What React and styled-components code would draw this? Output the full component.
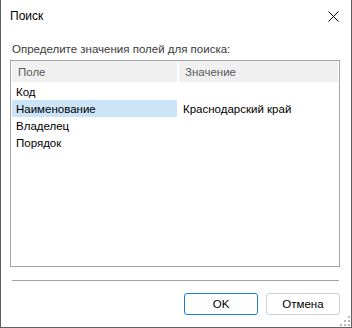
import React from 'react';
import styled, { createGlobalStyle } from 'styled-components';

const GlobalStyle = createGlobalStyle`
  html, body {
    margin: 0;
    padding: 0;
    background: #ffffff;
  }
  * {
    box-sizing: border-box;
  }
`;

const Window = styled.div`
  display: flex;
  flex-direction: column;
  width: 352px;
  height: 328px;
  background: #ffffff;
  border: 1px solid #5f5f5f;
  border-top: none;
  font-family: 'Liberation Sans', Arial, sans-serif;
  font-size: 11.5px;
  color: #000;
  position: relative;
`;

const TitleBar = styled.div`
  display: flex;
  align-items: center;
  justify-content: space-between;
  height: 31px;
  padding: 1px 10px 0 9px;
`;

const Title = styled.span`
  font-size: 12px;
  color: #000;
`;

const CloseButton = styled.button`
  display: flex;
  align-items: center;
  justify-content: center;
  width: 16px;
  height: 16px;
  padding: 0;
  border: 0;
  background: transparent;
`;

const Body = styled.div`
  display: flex;
  flex-direction: column;
  flex: 1;
  padding: 8px 11px 0 9px;
`;

const Prompt = styled.div`
  height: 21px;
  padding: 4px 0 0 2px;
  color: #3b3b3b;
`;

const ListBox = styled.div`
  height: 207px;
  border: 1px solid #a5a5a5;
  padding: 0 1px;
`;

const Row = styled.div`
  display: grid;
  grid-template-columns: 165px 1fr;
  column-gap: ${p => (p.$header ? '2px' : '0')};
  height: ${p => (p.$header ? '21px' : '17px')};
  margin-bottom: ${p => (p.$header ? '1px' : '0')};
`;

const Cell = styled.div`
  display: flex;
  align-items: center;
  padding-left: ${p => (p.$header ? '6px' : '4px')};
  background: ${p => (p.$header ? '#f0f0f0' : p.$selected ? '#cce4f7' : 'transparent')};
  color: ${p => (p.$header ? '#5a5a5a' : '#000')};
  white-space: nowrap;
`;

const ValueCell = styled(Cell)`
  padding-left: 6px;
`;

const Divider = styled.div`
  height: 1px;
  margin: 13px 1px 0 2px;
  background: #a0a0a0;
`;

const Footer = styled.div`
  display: flex;
  justify-content: flex-end;
  gap: 8px;
  padding-top: 12px;
`;

const Button = styled.button`
  width: 74px;
  height: 22px;
  padding: 0;
  font-family: inherit;
  font-size: 11.5px;
  color: #000;
  background: #ffffff;
  border: 1px solid ${p => (p.$primary ? '#1a7fd0' : '#d0d0d0')};
  border-radius: 3px;
`;

const Grip = styled.svg`
  position: absolute;
  right: 1px;
  bottom: 1px;
`;

const rows = [
  { name: 'Код', value: '' },
  { name: 'Наименование', value: 'Краснодарский край', selected: true },
  { name: 'Владелец', value: '' },
  { name: 'Порядок', value: '' },
];

export default function App() {
  return (
    <>
      <GlobalStyle />
      <Window>
        <TitleBar>
          <Title>Поиск</Title>
          <CloseButton aria-label="Закрыть">
            <svg width="11" height="11" viewBox="0 0 11 11">
              <path d="M0.5 0.5 L10.5 10.5 M10.5 0.5 L0.5 10.5" stroke="#000" strokeWidth="1" />
            </svg>
          </CloseButton>
        </TitleBar>
        <Body>
          <Prompt>Определите значения полей для поиска:</Prompt>
          <ListBox>
            <Row $header>
              <Cell $header>Поле</Cell>
              <ValueCell $header>Значение</ValueCell>
            </Row>
            {rows.map(r => (
              <Row key={r.name}>
                <Cell $selected={r.selected}>{r.name}</Cell>
                <ValueCell>{r.value}</ValueCell>
              </Row>
            ))}
          </ListBox>
          <Divider />
          <Footer>
            <Button $primary>OK</Button>
            <Button>Отмена</Button>
          </Footer>
        </Body>
        <Grip width="10" height="10" viewBox="0 0 10 10">
          <g fill="#b8b8b8">
            <rect x="8" y="0" width="2" height="2" />
            <rect x="4" y="4" width="2" height="2" />
            <rect x="8" y="4" width="2" height="2" />
            <rect x="0" y="8" width="2" height="2" />
            <rect x="4" y="8" width="2" height="2" />
            <rect x="8" y="8" width="2" height="2" />
          </g>
        </Grip>
      </Window>
    </>
  );
}
